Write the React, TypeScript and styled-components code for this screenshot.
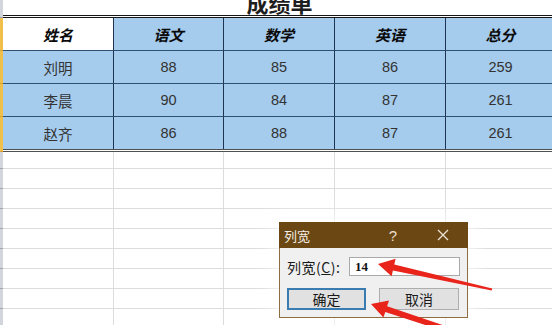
import React from "react";
import styled, { createGlobalStyle } from "styled-components";

const Global = createGlobalStyle`
  html, body { margin: 0; padding: 0; background: #fff; }
  body { width: 552px; height: 325px; overflow: hidden; font-family: "Noto Sans CJK SC", sans-serif; }
`;

const Page = styled.div`
  position: relative;
  width: 552px;
  height: 325px;
  overflow: hidden;
  background: #fff;
  display: flex;
`;

const Strip = styled.div`
  width: 3px;
  flex-shrink: 0;
  display: flex;
  flex-direction: column;
`;

const StripSeg = styled.div<{ $h: number; $sel?: boolean }>`
  height: ${(p) => p.$h}px;
  flex-shrink: 0;
  box-sizing: border-box;
  background: ${(p) => (p.$sel ? "#f1c04c" : "#d3d5dc")};
  border-bottom: 1px solid ${(p) => (p.$sel ? "#d9a032" : "#a3a7b0")};
`;

const Sheet = styled.div`
  flex: 1;
  display: flex;
  flex-direction: column;
`;

const TitleRow = styled.div`
  height: 15px;
  flex-shrink: 0;
  display: flex;
  align-items: flex-end;
  justify-content: center;
  width: 553px;
`;

const Title = styled.div`
  font-family: "Noto Sans CJK SC", sans-serif;
  font-weight: 700;
  font-size: 22px;
  line-height: 22px;
  color: #1e1e1e;
  margin-bottom: 2px;
`;

const Table = styled.div`
  border-top: 3px double #161616;
  border-bottom: 3px double #505050;
  display: flex;
  flex-direction: column;
`;

const Row = styled.div<{ $h: number }>`
  display: grid;
  grid-template-columns: 111px 110px 111px 111px 110px;
  height: ${(p) => p.$h}px;
  flex-shrink: 0;
`;

const Cell = styled.div<{ $kind: "head" | "headWhite" | "data" | "empty"; $last?: boolean }>`
  box-sizing: border-box;
  display: flex;
  align-items: center;
  justify-content: center;
  border-right: 1px solid ${(p) => (p.$kind === "empty" ? "#dcdcdc" : "#1d3553")};
  border-bottom: ${(p) =>
    p.$last ? "none" : `1px solid ${p.$kind === "empty" ? "#dcdcdc" : "#2f4f73"}`};
  background: ${(p) =>
    p.$kind === "headWhite" ? "#ffffff" : p.$kind === "empty" ? "#ffffff" : "#a5cbed"};
  font-family: ${(p) =>
    p.$kind === "head" || p.$kind === "headWhite"
      ? `"Noto Sans CJK SC", sans-serif`
      : `"Liberation Sans", "Noto Sans CJK SC", sans-serif`};
  font-size: ${(p) => (p.$kind === "data" ? "14.5px" : "15px")};
  font-weight: ${(p) => (p.$kind === "head" || p.$kind === "headWhite" ? 700 : 400)};
  font-style: ${(p) => (p.$kind === "head" || p.$kind === "headWhite" ? "italic" : "normal")};
  color: ${(p) => (p.$kind === "data" ? "#333" : "#0a0a0a")};
`;

const Dialog = styled.div`
  position: absolute;
  left: 279px;
  top: 222px;
  width: 189px;
  height: 96px;
  display: flex;
  flex-direction: column;
  box-shadow: 0 0 18px 8px rgba(255, 255, 255, 0.7);
  font-family: "Noto Sans CJK SC", sans-serif;
`;

const TitleBar = styled.div`
  height: 26px;
  flex-shrink: 0;
  background: #6a4713;
  display: flex;
  align-items: center;
  color: #fff;
`;

const DialogTitle = styled.div`
  flex: 1;
  padding-left: 5px;
  font-size: 13px;
  color: #f4eee6;
`;

const TitleButton = styled.div`
  width: 50px;
  height: 26px;
  display: flex;
  align-items: center;
  justify-content: center;
  font-family: "Liberation Sans", sans-serif;
  font-size: 15px;
  color: #e9dfd2;
`;

const DialogBody = styled.div`
  flex: 1;
  background: #f0f0f0;
  border: 1px solid #8e6d40;
  border-top: none;
  padding: 9px 7px 0 7px;
  display: flex;
  flex-direction: column;
  gap: 12px;
`;

const FieldRow = styled.div`
  display: flex;
  align-items: center;
  height: 19px;
`;

const Label = styled.div`
  width: 62px;
  font-size: 14px;
  color: #1a1a1a;
  letter-spacing: 0.5px;
  u { text-decoration: underline; }
`;

const Input = styled.div`
  box-sizing: border-box;
  width: 111px;
  height: 19px;
  background: #fff;
  border: 1px solid #a9a9a9;
  padding-left: 5px;
  display: flex;
  align-items: center;
  font-family: "Liberation Serif", serif;
  font-weight: 600;
  font-size: 13px;
  color: #111;
`;

const ButtonRow = styled.div`
  display: flex;
  gap: 13px;
`;

const Button = styled.div<{ $focus?: boolean }>`
  box-sizing: border-box;
  width: ${(p) => (p.$focus ? 79 : 80)}px;
  height: 22px;
  background: #e1e1e1;
  border: ${(p) => (p.$focus ? "2px solid #3b7cb0" : "1px solid #adadad")};
  display: flex;
  align-items: center;
  justify-content: center;
  font-size: 14px;
  color: #1a1a1a;
`;

const Overlay = styled.svg`
  position: absolute;
  left: 0;
  top: 0;
  pointer-events: none;
`;

const headers = ["姓名", "语文", "数学", "英语", "总分"];
const data = [
  ["刘明", "88", "85", "86", "259"],
  ["李晨", "90", "84", "87", "261"],
  ["赵齐", "86", "88", "87", "261"],
];
const emptyHeights = [17, 20, 20, 20, 20, 20, 20, 20, 20];

export default function App() {
  return (
    <>
      <Global />
      <Page>
        <Strip>
          <StripSeg $h={18} />
          <StripSeg $h={33} $sel />
          <StripSeg $h={33} $sel />
          <StripSeg $h={33} $sel />
          <StripSeg $h={35} $sel />
          {emptyHeights.map((h, i) => (
            <StripSeg key={i} $h={h} />
          ))}
        </Strip>
        <Sheet>
          <TitleRow>
            <Title>成绩单</Title>
          </TitleRow>
          <Table>
            <Row $h={33}>
              {headers.map((h, i) => (
                <Cell key={h} $kind={i === 0 ? "headWhite" : "head"}>
                  {h}
                </Cell>
              ))}
            </Row>
            {data.map((r, ri) => (
              <Row key={ri} $h={ri === data.length - 1 ? 32 : 33}>
                {r.map((v, ci) => (
                  <Cell key={ci} $kind="data" $last={ri === data.length - 1}>
                    {v}
                  </Cell>
                ))}
              </Row>
            ))}
          </Table>
          {emptyHeights.map((h, i) => (
            <Row key={i} $h={h}>
              {[0, 1, 2, 3, 4].map((c) => (
                <Cell key={c} $kind="empty" />
              ))}
            </Row>
          ))}
        </Sheet>

        <Dialog>
          <TitleBar>
            <DialogTitle>列宽</DialogTitle>
            <TitleButton>?</TitleButton>
            <TitleButton>
              <svg width="12" height="12" viewBox="0 0 12 12">
                <path d="M1 1 L11 11 M11 1 L1 11" stroke="#ece3d6" strokeWidth="1.3" />
              </svg>
            </TitleButton>
          </TitleBar>
          <DialogBody>
            <FieldRow>
              <Label>
                列宽(<u>C</u>):
              </Label>
              <Input>14</Input>
            </FieldRow>
            <ButtonRow>
              <Button $focus>确定</Button>
              <Button>取消</Button>
            </ButtonRow>
          </DialogBody>
        </Dialog>

        <Overlay width="552" height="325" viewBox="0 0 552 325">
          <polygon
            fill="#e8241b"
            points="378,264 391.6,276.3 392.9,270.4 491.8,290.5 492.2,288.5 394.3,264.6 395.6,258.7"
          />
          <polygon
            fill="#e8241b"
            points="371,304 383.4,317.6 385.3,311.9 469.2,339.4 471,334.6 387.1,306.3 389,300.6"
          />
        </Overlay>
      </Page>
    </>
  );
}
